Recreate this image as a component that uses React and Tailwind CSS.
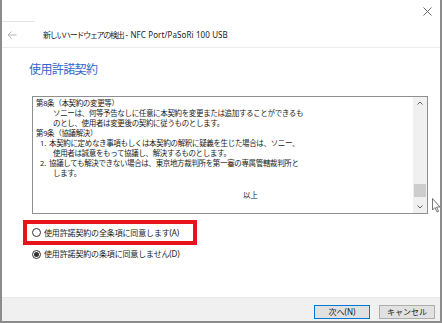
const jp = "font-['Noto_Sans','Noto_Sans_CJK_JP',sans-serif]";

function Radio({ checked }) {
  return (
    <span className="flex h-[9px] w-[9px] shrink-0 items-center justify-center rounded-full border border-[#333] bg-white">
      {checked && <span className="h-[5px] w-[5px] rounded-full bg-[#333]" />}
    </span>
  );
}

const lines = [
  { pl: 0, text: "第8条（本契約の変更等）" },
  { pl: 17, text: "ソニーは、何等予告なしに任意に本契約を変更または追加することができるも" },
  { pl: 17, text: "のとし、使用者は変更後の契約に従うものとします。" },
  { pl: 0, text: "第9条（協議解決）" },
  { pl: 4, num: "1.", text: "本契約に定めなき事項もしくは本契約の解釈に疑義を生じた場合は、ソニー、" },
  { pl: 17, text: "使用者は誠意をもって協議し、解決するものとします。" },
  { pl: 4, num: "2.", text: "協議しても解決できない場合は、東京地方裁判所を第一審の専属管轄裁判所と" },
  { pl: 17, text: "します。" },
];

export default function App() {
  return (
    <div className={`relative flex h-[323px] w-[442px] flex-col border-x-2 border-b-2 border-[#8c8c8c] bg-white text-[#1a1a1a] ${jp}`}>
      {/* title bar */}
      <div className="flex h-[22px] shrink-0 items-stretch">
        <div className="w-[33px] border-b border-[#e3e3e3]" />
        <div className="flex-1" />
        <div className="flex w-[26px] items-center justify-center">
          <svg width="9" height="9" viewBox="0 0 9 9" stroke="#6b6b6b" strokeWidth="1">
            <path d="M0.5 0.5 L8.5 8.5 M8.5 0.5 L0.5 8.5" />
          </svg>
        </div>
      </div>

      {/* header */}
      <div className="flex h-[26px] shrink-0 items-center border-b border-[#ececec]">
        <div className="flex w-[41px] pl-[5px]">
          <svg width="10" height="8" viewBox="0 0 10 8" fill="none" stroke="#b5b5b5" strokeWidth="1">
            <path d="M9.5 4 H1 M4.5 0.5 L1 4 L4.5 7.5" />
          </svg>
        </div>
        <span className="text-[8px] leading-none whitespace-nowrap">
          <span className="tracking-[-1.3px]">新しいハードウェアの検出</span>
          <span className="tracking-[0.1px]"> - NFC Port/PaSoRi 100 USB</span>
        </span>
      </div>

      {/* heading */}
      <div className="mt-[14px] pl-[27px] text-[12px] leading-[16px] tracking-[-0.6px] text-[#3167c5]">
        使用許諾契約
      </div>

      {/* license text box */}
      <div className="ml-[30px] mt-[18px] flex h-[118px] w-[396px] border border-[#8f8f8f] bg-white">
        <div className="flex-1 pl-[3px] pt-[1px] text-[7.5px] leading-[10px] tracking-[-0.35px] whitespace-nowrap">
          {lines.map((l, i) => (
            <div key={i} className="flex" style={{ paddingLeft: l.pl }}>
              {l.num && <span className="w-[9px] tracking-normal">{l.num}</span>}
              <span>{l.text}</span>
            </div>
          ))}
          <div className="h-[10px]" />
          <div className="mt-[2px] pl-[207px] tracking-normal">以上</div>
        </div>
        <div className="flex w-[14px] flex-col items-center bg-[#f0f0f0]">
          <div className="flex h-[12px] items-center">
            <svg width="6" height="4" viewBox="0 0 6 4" fill="none" stroke="#606060" strokeWidth="1">
              <path d="M0.5 3.5 L3 1 L5.5 3.5" />
            </svg>
          </div>
          <div className="flex-1" />
          <div className="mb-[4px] h-[13px] w-[12px] bg-[#cdcdcd]" />
          <div className="flex h-[12px] items-center">
            <svg width="6" height="4" viewBox="0 0 6 4" fill="none" stroke="#606060" strokeWidth="1">
              <path d="M0.5 0.5 L3 3 L5.5 0.5" />
            </svg>
          </div>
        </div>
      </div>

      {/* options */}
      <div className="ml-[21px] mt-[6px] flex h-[25px] w-[174px] items-center gap-[3px] border-4 border-[#e8141b] pl-[5px] text-[8px] tracking-[-0.15px] whitespace-nowrap">
        <Radio />
        <span>使用許諾契約の全条項に同意します(A)</span>
      </div>
      <div className="ml-[30px] mt-[4px] flex items-center gap-[3px] text-[8px] leading-[10px] tracking-[-0.15px] whitespace-nowrap">
        <Radio checked />
        <span>使用許諾契約の条項に同意しません(D)</span>
      </div>

      <div className="flex-1" />

      {/* footer */}
      <div className="flex h-[24px] shrink-0 items-start justify-end gap-[9px] border-t border-[#e8e8e8] bg-[#f0f0f0] pr-[5px] pt-[7px]">
        <button className="flex h-[14px] w-[56px] items-center justify-center border border-[#0078d7] bg-[#e1e1e1] text-[8px] leading-none">
          次へ(N)
        </button>
        <button className="flex h-[14px] w-[56px] items-center justify-center border border-[#adadad] bg-[#e1e1e1] text-[8px] leading-none">
          キャンセル
        </button>
      </div>

      {/* mouse cursor */}
      <svg className="absolute left-[430px] top-[198px]" width="9" height="15" viewBox="0 0 9 15">
        <path d="M0.5 0.5 L0.5 12 L3 9.5 L5 14 L6.5 13.3 L4.6 9 L8 9 Z" fill="white" stroke="#555" strokeWidth="0.8" />
      </svg>
    </div>
  );
}
